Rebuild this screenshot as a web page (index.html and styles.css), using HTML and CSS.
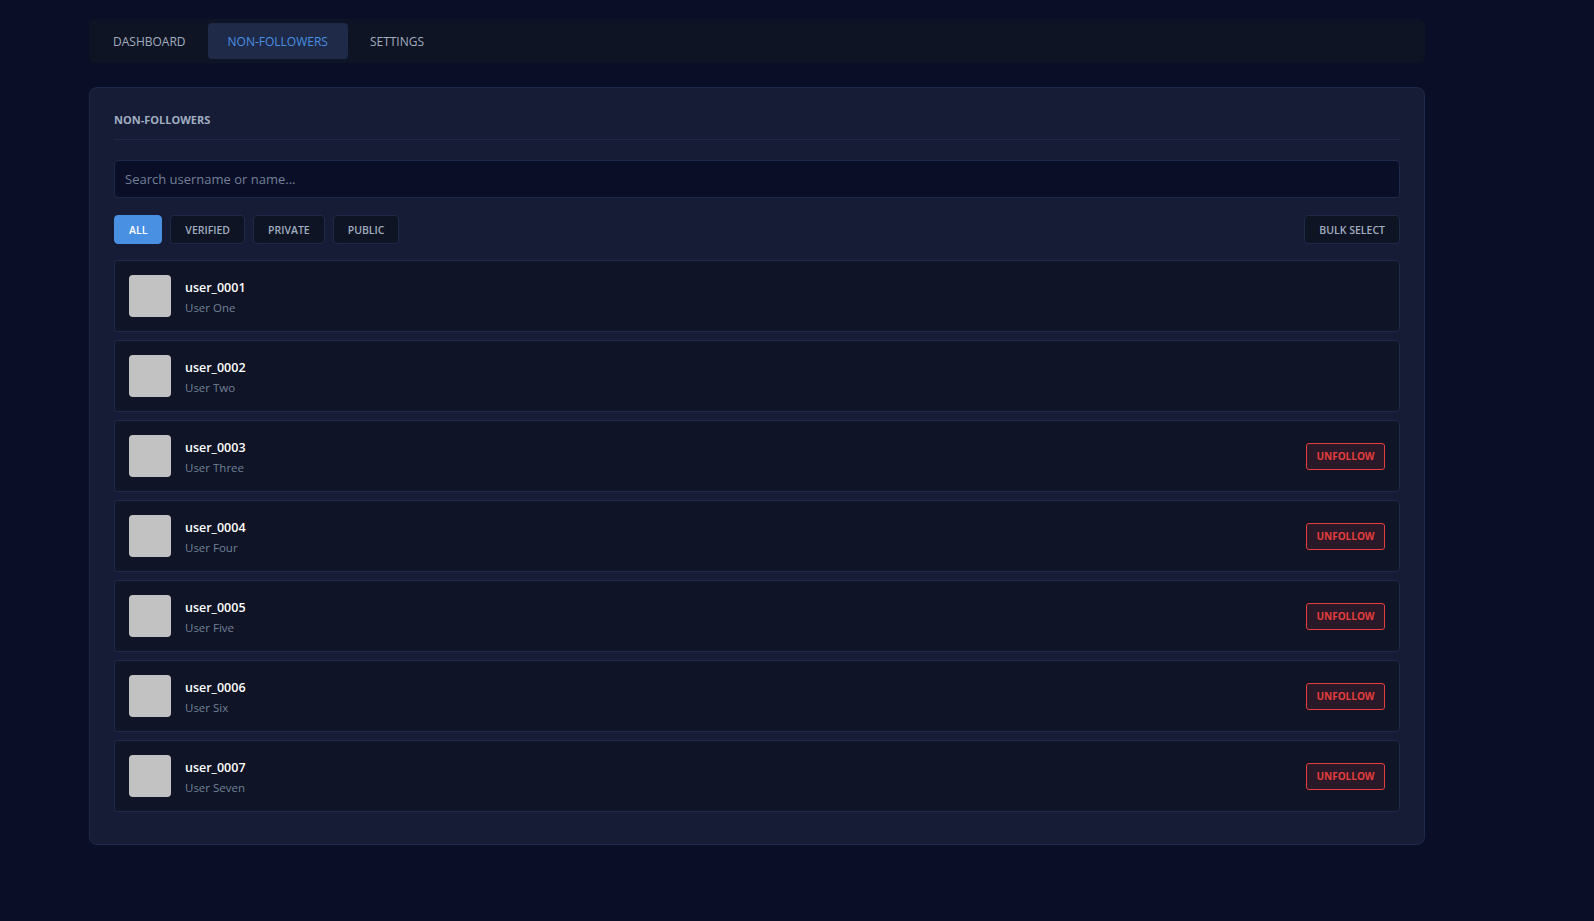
FILE: index.html
```html
<!DOCTYPE html>
<html lang="en">
<head>
    <meta charset="UTF-8">
    <meta name="viewport" content="width=device-width, initial-scale=1.0">
    <title>Non-Followers</title>
    <link rel="stylesheet" href="styles.css">
</head>
<body>
    <div class="container">
        <nav class="tabs">
            <a href="#dashboard" class="tab">DASHBOARD</a>
            <a href="#non-followers" class="tab active">NON-FOLLOWERS</a>
            <a href="#settings" class="tab">SETTINGS</a>
        </nav>

        <div class="panel">
            <h2 class="panel-title">NON-FOLLOWERS</h2>

            <input type="text" class="search" placeholder="Search username or name...">

            <div class="filters">
                <div class="filter-group">
                    <button class="filter active">ALL</button>
                    <button class="filter">VERIFIED</button>
                    <button class="filter">PRIVATE</button>
                    <button class="filter">PUBLIC</button>
                </div>
                <button class="filter">BULK SELECT</button>
            </div>

            <div class="user-list">
                <div class="user-row">
                    <div class="avatar"></div>
                    <div class="user-info">
                        <div class="username">user_0001</div>
                        <div class="fullname">User One</div>
                    </div>
                </div>
                <div class="user-row">
                    <div class="avatar"></div>
                    <div class="user-info">
                        <div class="username">user_0002</div>
                        <div class="fullname">User Two</div>
                    </div>
                </div>
                <div class="user-row">
                    <div class="avatar"></div>
                    <div class="user-info">
                        <div class="username">user_0003</div>
                        <div class="fullname">User Three</div>
                    </div>
                    <button class="unfollow">UNFOLLOW</button>
                </div>
                <div class="user-row">
                    <div class="avatar"></div>
                    <div class="user-info">
                        <div class="username">user_0004</div>
                        <div class="fullname">User Four</div>
                    </div>
                    <button class="unfollow">UNFOLLOW</button>
                </div>
                <div class="user-row">
                    <div class="avatar"></div>
                    <div class="user-info">
                        <div class="username">user_0005</div>
                        <div class="fullname">User Five</div>
                    </div>
                    <button class="unfollow">UNFOLLOW</button>
                </div>
                <div class="user-row">
                    <div class="avatar"></div>
                    <div class="user-info">
                        <div class="username">user_0006</div>
                        <div class="fullname">User Six</div>
                    </div>
                    <button class="unfollow">UNFOLLOW</button>
                </div>
                <div class="user-row">
                    <div class="avatar"></div>
                    <div class="user-info">
                        <div class="username">user_0007</div>
                        <div class="fullname">User Seven</div>
                    </div>
                    <button class="unfollow">UNFOLLOW</button>
                </div>
            </div>
        </div>
    </div>
</body>
</html>
```

FILE: styles.css
```css
* {
    margin: 0;
    padding: 0;
    box-sizing: border-box;
}

body {
    font-family: 'Open Sans', 'Noto Sans', sans-serif;
    background-color: #0a0e27;
    color: #ffffff;
    min-height: 100vh;
    padding: 19px 0 0 89px;
}

.container {
    width: 1336px;
}

.tabs {
    display: flex;
    gap: 2px;
    padding: 4px;
    height: 44px;
    background-color: #0f1424;
    border-radius: 6px;
}

.tab {
    display: flex;
    align-items: center;
    padding: 0 20px;
    color: #a0aec0;
    text-decoration: none;
    font-size: 12px;
    border-radius: 4px;
}

.tab.active {
    background-color: #1e2a47;
    color: #4a90e2;
}

.panel {
    margin-top: 24px;
    background-color: #161b36;
    border: 1px solid #1f2a4a;
    border-radius: 8px;
    padding: 24px;
}

.panel-title {
    font-size: 11px;
    font-weight: 700;
    line-height: 15px;
    color: #a0aec0;
    padding-bottom: 12px;
    border-bottom: 1px solid #1f2a4a;
    margin-bottom: 20px;
}

.search {
    display: block;
    width: 100%;
    height: 38px;
    padding: 0 10px;
    background-color: #0a0e27;
    border: 1px solid #1f2a4a;
    border-radius: 4px;
    color: #ffffff;
    font-family: inherit;
    font-size: 13px;
    outline: none;
}

.search::placeholder {
    color: #718096;
}

.filters {
    display: flex;
    justify-content: space-between;
    margin: 17px 0 16px;
}

.filter-group {
    display: flex;
    gap: 8px;
}

.filter {
    height: 29px;
    padding: 0 14px;
    background-color: #0f1424;
    border: 1px solid #1f2a4a;
    border-radius: 4px;
    color: #a0aec0;
    font-family: inherit;
    font-size: 10.5px;
    font-weight: 600;
    cursor: pointer;
}

.filter.active {
    background-color: #4a90e2;
    border-color: #4a90e2;
    color: #ffffff;
}

.user-row {
    display: flex;
    align-items: center;
    gap: 14px;
    height: 72px;
    padding: 0 14px;
    margin-bottom: 8px;
    background-color: #0f1426;
    border: 1px solid #1f2a4a;
    border-radius: 4px;
}

.avatar {
    width: 42px;
    height: 42px;
    background-color: #c2c2c2;
    border-radius: 4px;
}

.user-info {
    flex: 1;
    padding-top: 3px;
}

.username {
    font-size: 12.5px;
    font-weight: 600;
    line-height: 18px;
}

.fullname {
    font-size: 11.5px;
    line-height: 17px;
    margin-top: 2px;
    color: #718096;
}

.unfollow {
    width: 79px;
    height: 27px;
    background-color: rgba(229, 62, 62, 0.12);
    border: 1px solid #e53e3e;
    border-radius: 3px;
    color: #e53e3e;
    font-family: inherit;
    font-size: 10px;
    font-weight: 700;
    cursor: pointer;
}
```
